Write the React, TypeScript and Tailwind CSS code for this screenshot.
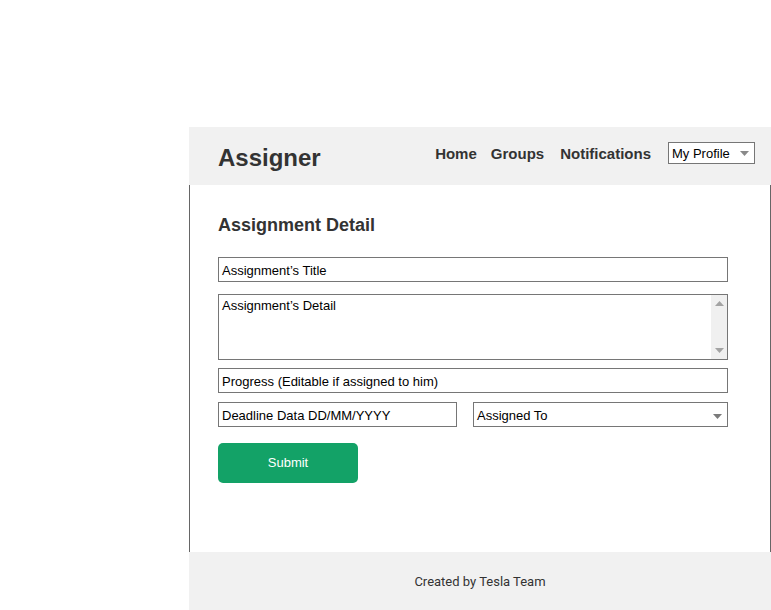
import React from 'react';

const Caret: React.FC<{ up?: boolean; color?: string }> = ({ up, color = '#7b7b7b' }) => (
  <svg width="9" height="5" viewBox="0 0 9 5" className="block">
    <polygon points={up ? '0,5 9,5 4.5,0' : '0,0 9,0 4.5,5'} fill={color} />
  </svg>
);

export default function App() {
  return (
    <div className="w-[771px] h-[610px] bg-white pt-[127px] pl-[189px] font-['Liberation_Sans',Arial,sans-serif] overflow-hidden">
      <div className="w-[582px] flex flex-col">
        {/* Header */}
        <header className="h-[58px] bg-[#f1f1f1] flex items-start justify-between pl-[29px] pr-[16px]">
          <h1 className="mt-[17px] text-[24px] leading-[28px] font-bold text-[#333]">Assigner</h1>
          <nav className="mt-[15px] flex items-center h-[22px] text-[15px] font-bold text-[#333]">
            <span className="pt-[2px]">Home</span>
            <span className="ml-[14px] pt-[2px]">Groups</span>
            <span className="ml-[16px] pt-[2px]">Notifications</span>
            <div className="ml-[17px] w-[87px] h-[22px] border border-[#767676] bg-white flex items-center justify-between pl-[3px] pr-[5px] pt-[1px] text-[13px] font-normal text-black">
              <span>My Profile</span>
              <Caret color="#8a8a8a" />
            </div>
          </nav>
        </header>

        {/* Body */}
        <main className="h-[367px] border-x border-[#666] pt-[30px] pl-[28px] pr-[42px]">
          <h2 className="text-[18px] leading-[21px] font-bold text-[#333]">Assignment Detail</h2>

          <div className="mt-[21px] flex flex-col text-[13px] text-black">
            <div className="h-[25px] border border-[#767676] flex items-center pl-[3px] pt-[3px]">Assignment’s Title</div>

            <div className="mt-[12px] h-[66px] border border-[#767676] flex">
              <div className="flex-1 pl-[3px] pt-[3px] leading-[16px]">Assignment’s Detail</div>
              <div className="w-[16px] bg-[#f0f0f0] flex flex-col items-center justify-between py-[6px]">
                <Caret up color="#a3a3a3" />
                <Caret color="#a3a3a3" />
              </div>
            </div>

            <div className="mt-[8px] h-[25px] border border-[#767676] flex items-center pl-[3px] pt-[3px]">Progress (Editable if assigned to him)</div>

            <div className="mt-[9px] flex gap-[16px]">
              <div className="w-[239px] h-[25px] border border-[#767676] flex items-center pl-[3px] pt-[3px]">Deadline Data DD/MM/YYYY</div>
              <div className="flex-1 h-[25px] border border-[#767676] flex items-center justify-between pl-[3px] pr-[5px] pt-[3px]">
                <span>Assigned To</span>
                <Caret />
              </div>
            </div>

            <button className="mt-[16px] w-[140px] h-[40px] rounded-[5px] bg-[#13a267] text-white text-[13px]">Submit</button>
          </div>
        </main>

        {/* Footer */}
        <footer className="h-[58px] bg-[#f1f1f1] flex items-center justify-center pt-[2px] font-['Roboto',sans-serif] text-[13px] text-[#333]">
          Created by Tesla Team
        </footer>
      </div>
    </div>
  );
}
